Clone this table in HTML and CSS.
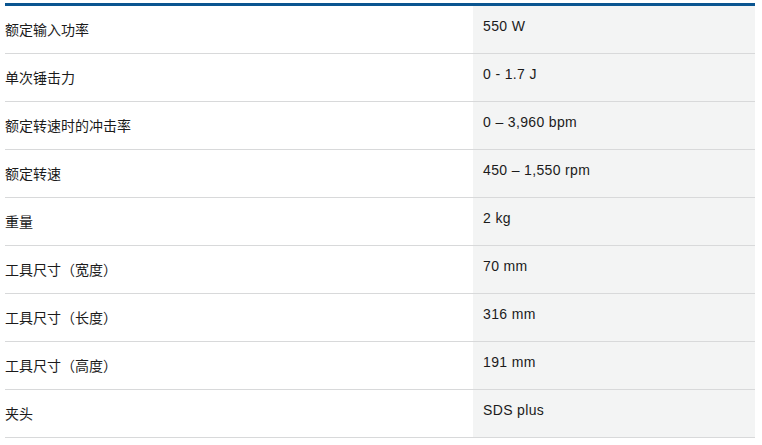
FILE: index.html
```html
<!DOCTYPE html>
<html lang="zh-CN">
<head>
<meta charset="utf-8">
<link rel="stylesheet" href="styles.css">
</head>
<body>
<div class="specs">
  <div class="row"><div class="label">额定输入功率</div><div class="value">550 W</div></div>
  <div class="row"><div class="label">单次锤击力</div><div class="value">0 - 1.7 J</div></div>
  <div class="row"><div class="label">额定转速时的冲击率</div><div class="value">0 – 3,960 bpm</div></div>
  <div class="row"><div class="label">额定转速</div><div class="value">450 – 1,550 rpm</div></div>
  <div class="row"><div class="label">重量</div><div class="value">2 kg</div></div>
  <div class="row"><div class="label">工具尺寸（宽度）</div><div class="value">70 mm</div></div>
  <div class="row"><div class="label">工具尺寸（长度）</div><div class="value">316 mm</div></div>
  <div class="row"><div class="label">工具尺寸（高度）</div><div class="value">191 mm</div></div>
  <div class="row"><div class="label">夹头</div><div class="value">SDS plus</div></div>
</div>
</body>
</html>
```
FILE: styles.css
```css
html, body {
  margin: 0;
  padding: 0;
  background: #ffffff;
}
body {
  padding: 3px 7px 0 5px;
  font-family: "Liberation Sans", "Noto Sans CJK SC", sans-serif;
  color: #1b1b1b;
}
.specs {
  width: 750px;
  border-top: 3px solid #0a5590;
}
.row {
  display: grid;
  grid-template-columns: 468px 1fr;
  height: 48px;
  box-sizing: border-box;
  border-bottom: 1px solid #d8d9da;
}
.label {
  font-family: "Noto Sans CJK SC", sans-serif;
  font-size: 14px;
  line-height: 20px;
  padding-top: 13px;
}
.value {
  background: #f3f4f4;
  font-size: 14px;
  line-height: 20px;
  letter-spacing: 0.35px;
  padding: 10px 0 0 10px;
}
```
